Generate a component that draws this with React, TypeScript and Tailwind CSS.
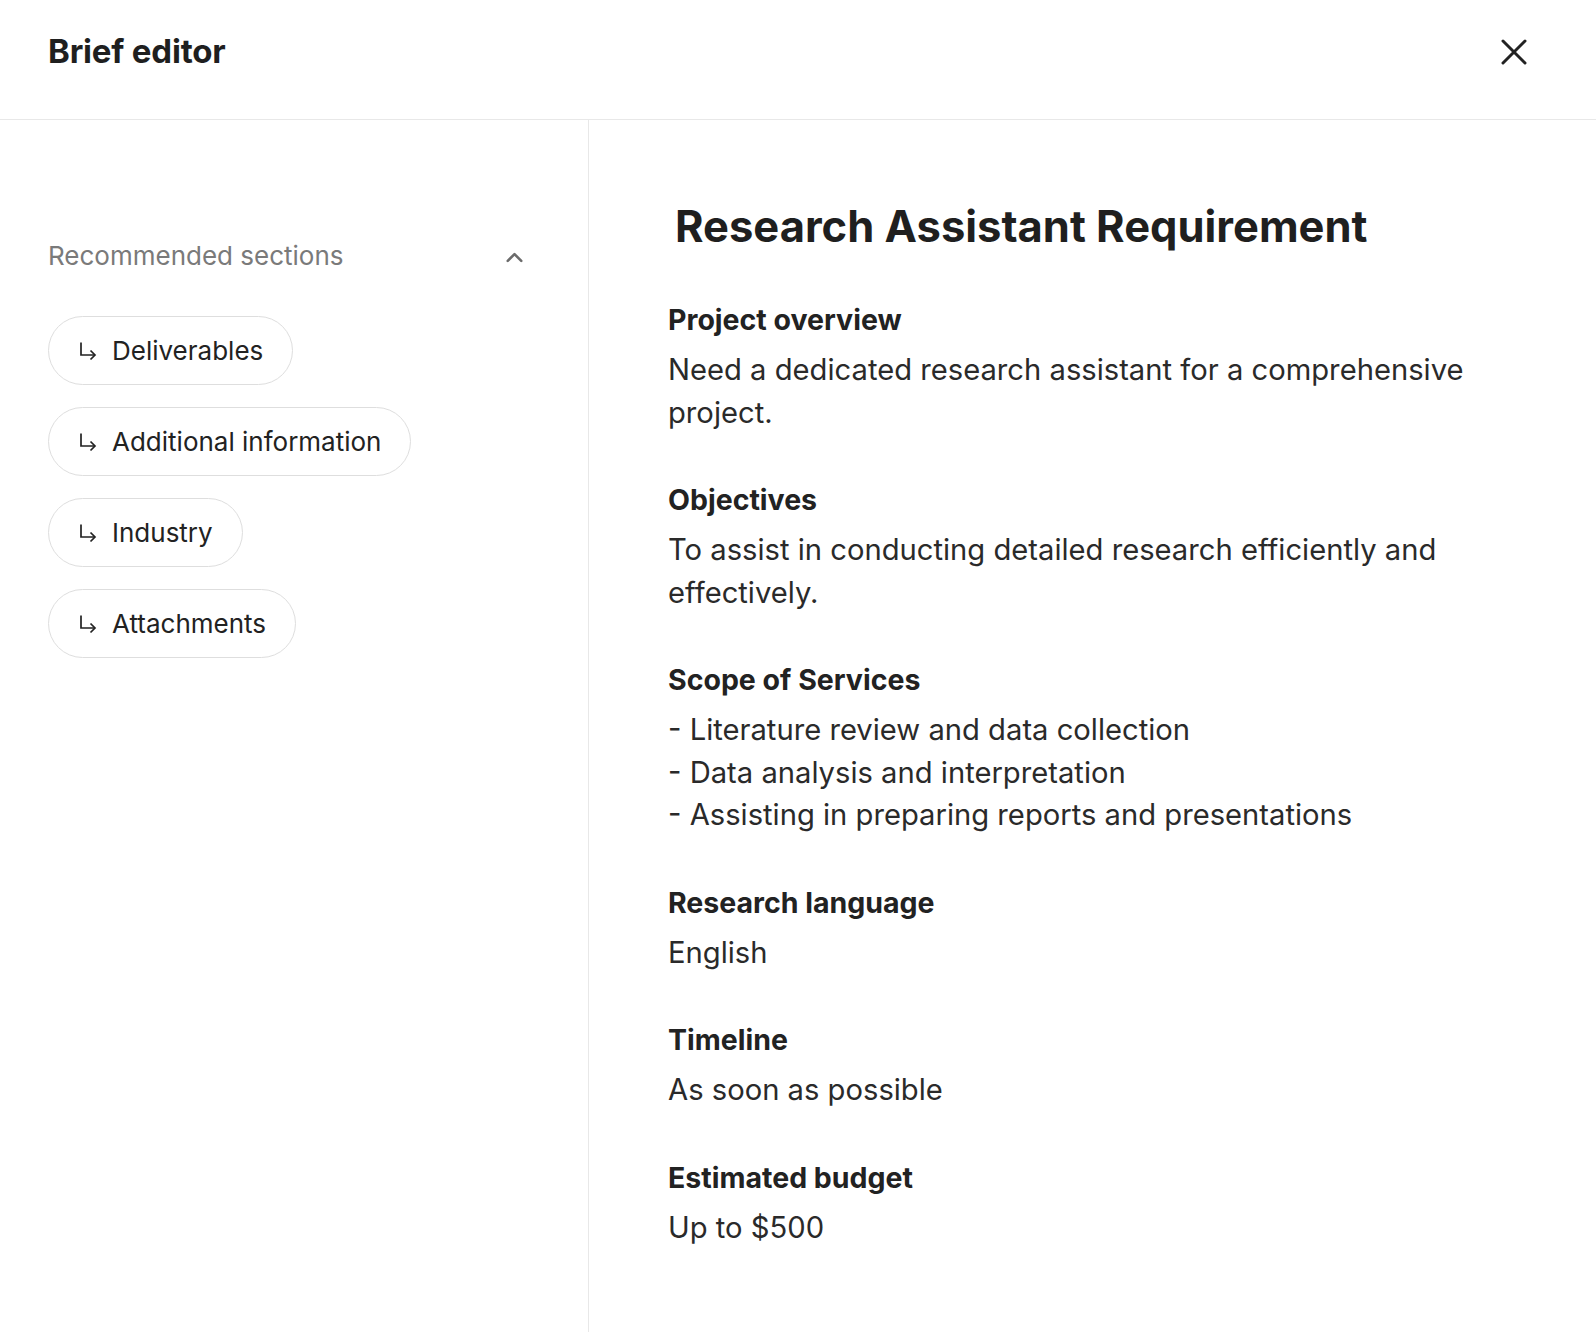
import { ChevronUp } from "lucide-react";

const chips = ["Deliverables", "Additional information", "Industry", "Attachments"];

const sections = [
  {
    title: "Project overview",
    lines: ["Need a dedicated research assistant for a comprehensive project."],
  },
  {
    title: "Objectives",
    lines: ["To assist in conducting detailed research efficiently and effectively."],
  },
  {
    title: "Scope of Services",
    lines: [
      "- Literature review and data collection",
      "- Data analysis and interpretation",
      "- Assisting in preparing reports and presentations",
    ],
  },
  { title: "Research language", lines: ["English"] },
  { title: "Timeline", lines: ["As soon as possible"] },
  { title: "Estimated budget", lines: ["Up to $500"] },
];

function ReturnArrow() {
  return (
    <svg width="18" height="20" viewBox="0 0 18 20" fill="none" className="shrink-0">
      <path d="M2 1.5v12.5h14" stroke="#222" strokeWidth="1.7" />
      <path d="M11.5 9.5 16 14l-4.5 4.5" stroke="#222" strokeWidth="1.7" />
    </svg>
  );
}

export default function App() {
  return (
    <div className="flex h-[1332px] w-full flex-col bg-white font-['Inter',sans-serif] text-[#222]">
      {/* Header */}
      <div className="h-[120px] shrink-0 border-b border-[#e8e8e8]">
        <div className="flex h-[104px] items-center justify-between pl-[48px] pr-[68px]">
          <h1 className="text-[33px] font-bold tracking-[-0.2px] text-[#1f1f1f]">Brief editor</h1>
          <button className="flex h-[28px] w-[28px] items-center justify-center">
            <svg width="26" height="26" viewBox="0 0 26 26" fill="none">
              <path d="M2 2l22 22M24 2 2 24" stroke="#222" strokeWidth="3" strokeLinecap="round" />
            </svg>
          </button>
        </div>
      </div>

      <div className="flex flex-1">
        {/* Left panel */}
        <aside className="w-[589px] shrink-0 border-r border-[#e8e8e8] pl-[48px] pr-[60px] pt-[118px]">
          <div className="flex h-[34px] items-center justify-between">
            <span className="text-[26px] text-[#7a7a7a]">Recommended sections</span>
            <ChevronUp size={27} strokeWidth={2.3} className="mt-[4px] text-[#6b6b6b]" />
          </div>

          <div className="mt-[44px] flex flex-col items-start gap-[22px]">
            {chips.map((chip) => (
              <button
                key={chip}
                className="flex h-[69px] items-center gap-[15px] rounded-full border border-[#dedede] pl-[30px] pr-[29px] text-[26px] text-[#222]"
              >
                <ReturnArrow />
                <span>{chip}</span>
              </button>
            ))}
          </div>
        </aside>

        {/* Brief content */}
        <main className="flex-1 pl-[79px] pt-[80px]">
          <div className="w-[850px]">
            <h2 className="ml-[7px] text-[43.5px] font-bold leading-[52px] text-[#1f1f1f]">
              Research Assistant Requirement
            </h2>

            <div className="mt-[47px] flex flex-col gap-[45px]">
              {sections.map((s) => (
                <section key={s.title}>
                  <h3 className="text-[28.5px] font-bold leading-[42px] text-[#222]">{s.title}</h3>
                  <div className="mt-[8px] text-[29.2px] leading-[42.5px] text-[#2a2a2a]">
                    {s.lines.map((l) => (
                      <p key={l}>{l}</p>
                    ))}
                  </div>
                </section>
              ))}
            </div>
          </div>
        </main>
      </div>
    </div>
  );
}
